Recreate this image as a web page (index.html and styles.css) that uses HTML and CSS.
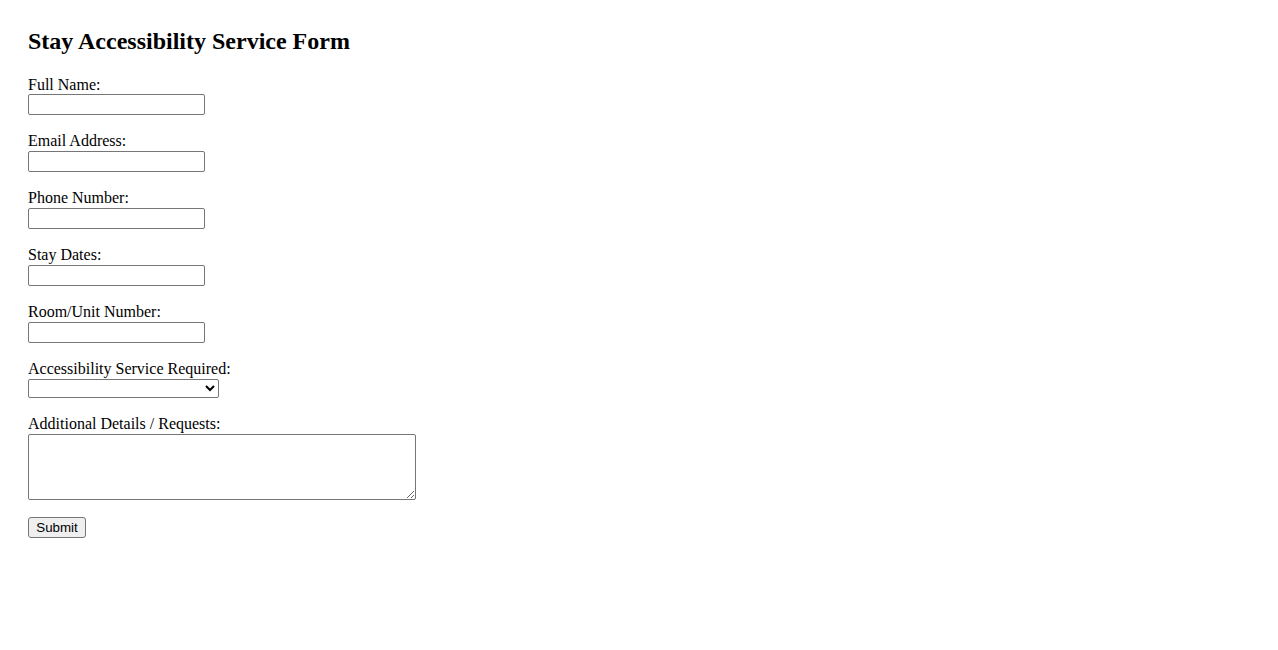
FILE: index.html
```html
<!DOCTYPE html>
<html lang="en">
<head>
<meta charset="utf-8">
<title>Stay Accessibility Service Form</title>
<link rel="stylesheet" href="styles.css">
</head>
<body>
<h2 class="title">Stay Accessibility Service Form</h2>
<form class="form">
  <div class="field">
    <label class="label" for="name">Full Name:</label>
    <input class="text-input" type="text" id="name">
  </div>
  <div class="field">
    <label class="label" for="email">Email Address:</label>
    <input class="text-input" type="email" id="email">
  </div>
  <div class="field">
    <label class="label" for="phone">Phone Number:</label>
    <input class="text-input" type="tel" id="phone">
  </div>
  <div class="field">
    <label class="label" for="dates">Stay Dates:</label>
    <input class="text-input" type="text" id="dates">
  </div>
  <div class="field">
    <label class="label" for="room">Room/Unit Number:</label>
    <input class="text-input" type="text" id="room">
  </div>
  <div class="field">
    <label class="label" for="service">Accessibility Service Required:</label>
    <select class="select" id="service">
      <option value=""></option>
      <option>Wheelchair Accessible Room</option>
      <option>Hearing Assistance</option>
      <option>Visual Assistance</option>
      <option>Mobility Equipment</option>
      <option>Other</option>
    </select>
  </div>
  <div class="field">
    <label class="label" for="details">Additional Details / Requests:</label>
    <textarea class="textarea" id="details" rows="4"></textarea>
  </div>
  <button class="submit" type="submit">Submit</button>
</form>
</body>
</html>
```

FILE: styles.css
```css
html {
  background: #ffffff;
}
body {
  margin: 28px;
  font-family: "Liberation Serif", "Times New Roman", serif;
  font-size: 16px;
  color: #000000;
}
.title {
  margin: 0 0 19.92px 0;
  font-size: 24px;
  font-weight: bold;
  line-height: 1.15;
}
.form {
  margin: 0;
  display: flex;
  flex-direction: column;
  align-items: flex-start;
}
.field {
  display: flex;
  flex-direction: column;
  align-items: flex-start;
  margin-bottom: 17.6px;
}
.label {
  display: block;
  line-height: 1.15;
  height: 18.4px;
}
.text-input {
  box-sizing: border-box;
  width: 177px;
  height: 21px;
  margin: 0;
  padding: 1px 2px;
  border: 1px solid #767676;
  border-radius: 2px;
  background: #ffffff;
  font-family: "Liberation Sans", Arial, sans-serif;
  font-size: 13.33px;
}
.select {
  box-sizing: border-box;
  width: 191px;
  height: 19px;
  margin: 0;
  border: 1px solid #767676;
  border-radius: 2px;
  background: #ffffff;
  font-family: "Liberation Sans", Arial, sans-serif;
  font-size: 13.33px;
}
.textarea {
  box-sizing: border-box;
  width: 388px;
  height: 66px;
  margin: 0;
  padding: 2px;
  border: 1px solid #767676;
  border-radius: 2px;
  background: #ffffff;
  font-family: "Liberation Mono", "Courier New", monospace;
  font-size: 13.33px;
}
.submit {
  box-sizing: border-box;
  width: 58px;
  height: 21px;
  margin: 0;
  padding: 1px 6px;
  border: 1px solid #767676;
  border-radius: 3px;
  background: #efefef;
  color: #000000;
  font-family: "Liberation Sans", Arial, sans-serif;
  font-size: 13.33px;
}
```
